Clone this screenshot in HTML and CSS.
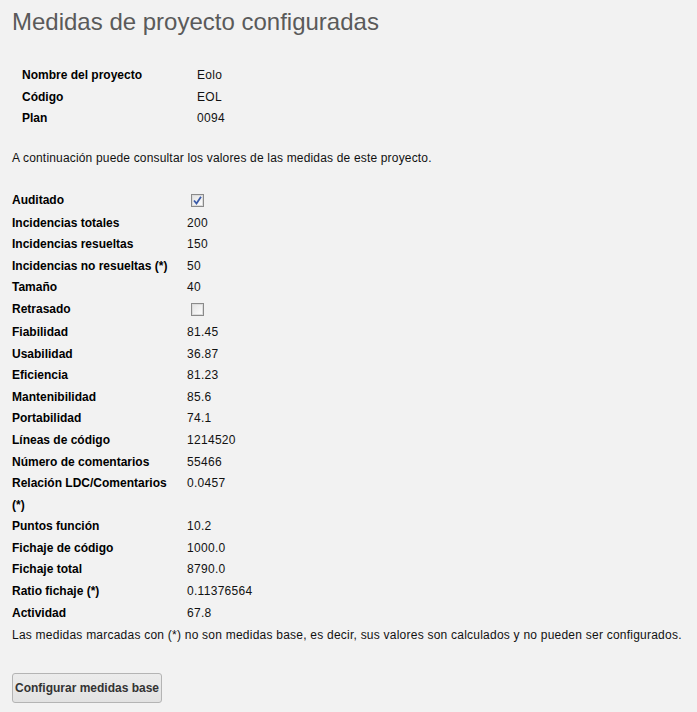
FILE: index.html
```html
<!DOCTYPE html>
<html lang="es">
<head>
<meta charset="utf-8">
<title>Medidas de proyecto configuradas</title>
<link rel="stylesheet" href="styles.css">
</head>
<body>
<h1 class="title">Medidas de proyecto configuradas</h1>

<table class="info">
  <tr><td class="label">Nombre del proyecto</td><td class="value">Eolo</td></tr>
  <tr><td class="label">Código</td><td class="value">EOL</td></tr>
  <tr><td class="label">Plan</td><td class="value">0094</td></tr>
</table>

<p class="intro">A continuación puede consultar los valores de las medidas de este proyecto.</p>

<table class="measures">
  <tr class="check-row"><td class="label">Auditado</td><td class="value"><span class="box checked"><svg width="9" height="9" viewBox="0 0 9 9"><path d="M1 4.5 L3.5 7.5 L8 0.8" fill="none" stroke="#3a5aa8" stroke-width="1.8"/></svg></span></td></tr>
  <tr><td class="label">Incidencias totales</td><td class="value">200</td></tr>
  <tr><td class="label">Incidencias resueltas</td><td class="value">150</td></tr>
  <tr><td class="label">Incidencias no resueltas (*)</td><td class="value">50</td></tr>
  <tr><td class="label">Tamaño</td><td class="value">40</td></tr>
  <tr class="check-row"><td class="label">Retrasado</td><td class="value"><span class="box"></span></td></tr>
  <tr><td class="label">Fiabilidad</td><td class="value">81.45</td></tr>
  <tr><td class="label">Usabilidad</td><td class="value">36.87</td></tr>
  <tr><td class="label">Eficiencia</td><td class="value">81.23</td></tr>
  <tr><td class="label">Mantenibilidad</td><td class="value">85.6</td></tr>
  <tr><td class="label">Portabilidad</td><td class="value">74.1</td></tr>
  <tr><td class="label">Líneas de código</td><td class="value">1214520</td></tr>
  <tr><td class="label">Número de comentarios</td><td class="value">55466</td></tr>
  <tr><td class="label">Relación LDC/Comentarios (*)</td><td class="value">0.0457</td></tr>
  <tr><td class="label">Puntos función</td><td class="value">10.2</td></tr>
  <tr><td class="label">Fichaje de código</td><td class="value">1000.0</td></tr>
  <tr><td class="label">Fichaje total</td><td class="value">8790.0</td></tr>
  <tr><td class="label">Ratio fichaje (*)</td><td class="value">0.11376564</td></tr>
  <tr><td class="label">Actividad</td><td class="value">67.8</td></tr>
</table>

<p class="note">Las medidas marcadas con (*) no son medidas base, es decir, sus valores son calculados y no pueden ser configurados.</p>

<button class="btn" type="button">Configurar medidas base</button>
</body>
</html>
```

FILE: styles.css
```css
html, body {
  margin: 0;
  padding: 0;
  background: #f2f2f2;
}
body {
  padding: 0 12px;
  font-family: "Liberation Sans", Arial, sans-serif;
  font-size: 12px;
  color: #111;
}
.title {
  margin: 8px 0 0;
  font-size: 24px;
  line-height: 28px;
  font-weight: normal;
  color: #5a5a5a;
}
table {
  border-collapse: collapse;
  border-spacing: 0;
}
td {
  padding: 0;
  line-height: 21.6px;
  vertical-align: top;
}
.label {
  width: 160px;
  padding-right: 15px;
  font-weight: bold;
  color: #000;
}
.value {
  color: #111;
  letter-spacing: 0.3px;
}
.info {
  margin: 29px 0 0 10px;
}
.intro {
  margin: 21px 0 0;
  line-height: 14px;
  letter-spacing: 0.17px;
}
.measures {
  margin-top: 25px;
}
.check-row td {
  height: 22.9px;
  line-height: 20.6px;
}
.box {
  display: inline-block;
  box-sizing: border-box;
  width: 13px;
  height: 13px;
  margin: 4px 0 0 4px;
  vertical-align: top;
  border: 1px solid #8a8a8a;
  background: linear-gradient(135deg, #e2e2e2 0%, #ffffff 100%);
  box-shadow: inset 0 0 0 1px #dcdcdc;
  position: relative;
}
.box svg {
  position: absolute;
  left: 1px;
  top: 1px;
}
.note {
  margin: 4px 0 0;
  line-height: 14px;
  letter-spacing: 0.23px;
}
.btn {
  display: block;
  margin-top: 31px;
  width: 150px;
  height: 30px;
  padding: 0;
  font-family: "Liberation Sans", Arial, sans-serif;
  font-size: 12px;
  font-weight: bold;
  color: #333;
  background: linear-gradient(#ececec, #e2e2e2);
  border: 1px solid #b4b4b4;
  border-radius: 3px;
}
```
